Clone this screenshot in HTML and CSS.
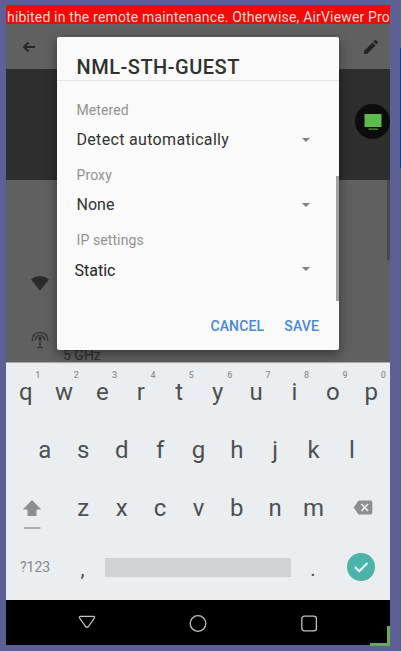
FILE: index.html
```html
<!DOCTYPE html>
<html lang="en">
<head>
<meta charset="utf-8">
<title>Wi-Fi network settings</title>
<link rel="stylesheet" href="styles.css">
</head>
<body>
<div class="edge"></div>
<main class="phone">
  <div class="ticker"><span>hibited in the remote maintenance. Otherwise, AirViewer Pro</span></div>
  <header class="appbar">
    <svg class="back" width="16" height="16" viewBox="0 0 16 16"><path d="M14 8H3M7.500 3.500L3 8l4.500 4.500" fill="none" stroke="#262626" stroke-width="1.900"/></svg>
    <svg width="18" height="18" viewBox="0 0 18 18"><path d="M2 13L10.600 4.400l3 3L5 16H2zM11.400 3.600l1.300-1.300q.7-.6 1.400 0l1.600 1.600q.6.700 0 1.400L14.400 6.600z" fill="#232323"/></svg>
  </header>
  <section class="banner">
    <div class="viewer"><svg width="18" height="18" viewBox="0 0 18 18"><path d="M.5 1h17v13H.5z" fill="#5dbb4b"/><path d="M4.500 15.500h9.500v1.300H4.500z" fill="#4c963e"/></svg></div>
  </section>
  <section class="details">
    <svg class="wifi" width="18" height="15" viewBox="0 0 18 15"><path d="M0 3.400Q9-3.200 18 3.400L9 14.800z" fill="#2b2b2b"/></svg>
    <svg class="antenna" width="18" height="18" viewBox="0 0 18 18"><g fill="none" stroke="#383838" stroke-width="1.500"><path d="M1.500 10C.5 5 4 1.500 9 1.500s8.500 3.500 7.500 8.500M4.500 9.500C4 6.500 6 4.500 9 4.500s5 2 4.500 5M9 7.500v9M6 16.500h6"/></g><circle cx="9" cy="7.500" r="1.800" fill="#333"/></svg>
    <span class="freq">5 GHz</span>
    <i class="page-scroll"></i>
  </section>

  <section class="keyboard">
    <div class="row">
      <b class="key">q<sup>1</sup></b><b class="key">w<sup>2</sup></b><b class="key">e<sup>3</sup></b><b class="key">r<sup>4</sup></b><b class="key">t<sup>5</sup></b><b class="key">y<sup>6</sup></b><b class="key">u<sup>7</sup></b><b class="key">i<sup>8</sup></b><b class="key">o<sup>9</sup></b><b class="key">p<sup>0</sup></b>
    </div>
    <div class="row inset">
      <b class="key">a</b><b class="key">s</b><b class="key">d</b><b class="key">f</b><b class="key">g</b><b class="key">h</b><b class="key">j</b><b class="key">k</b><b class="key">l</b>
    </div>
    <div class="row">
      <span class="wide shift"><svg width="20" height="32" viewBox="0 0 20 32"><path d="M10 1l9.200 9.500h-4.700V17h-9v-6.500H.8z" fill="#8b8f91"/><path d="M2 29h16.500" stroke="#a5a8aa" stroke-width="1.800"/></svg></span>
      <b class="key">z</b><b class="key">x</b><b class="key">c</b><b class="key">v</b><b class="key">b</b><b class="key">n</b><b class="key">m</b>
      <span class="wide erase"><svg width="20" height="15" viewBox="0 0 20 15"><path d="M5.500.5H17.500Q19.300.5 19.300 2.200v10.600q0 1.700-1.800 1.700H5.500L.7 7.500z" fill="#8b8f91"/><path d="M8.500 4l6.500 7M15 4l-6.500 7" stroke="#e4e8ea" stroke-width="1.800"/></svg></span>
    </div>
    <div class="row bottom">
      <span class="symbols">?123</span><b class="comma">,</b><span class="space"></span><b class="period">.</b>
      <span class="enter"><svg width="28" height="28" viewBox="0 0 28 28"><circle cx="14" cy="14" r="14" fill="#4bb3a9"/><path d="M8 14l4.200 4.300L20.500 10" fill="none" stroke="#e2fffb" stroke-width="2"/></svg></span>
    </div>
  </section>
  <nav class="navbar">
    <svg width="18" height="18" viewBox="0 0 18 18"><path d="M2.500 2.300h13q1.500.3.900 1.700L10.200 12.800q-1.200 1.200-2.400 0L1.600 4Q1 2.600 2.500 2.300z"/></svg>
    <svg width="18" height="18" viewBox="0 0 18 18"><circle cx="9" cy="9.500" r="7.800"/></svg>
    <svg width="18" height="18" viewBox="0 0 18 18"><rect x="1.800" y="2.200" width="14.600" height="14.600" rx="2.600"/></svg>
  </nav>

  <section class="dialog">
    <h1><span>NML-STH-GUEST</span></h1>
    <div class="fields">
      <label>Metered</label>
      <div class="select"><span class="long">Detect automatically</span><i></i></div>
      <label>Proxy</label>
      <div class="select"><span>None</span><i></i></div>
      <label>IP settings</label>
      <div class="select static"><span>Static</span><i></i></div>
    </div>
    <footer><button class="cancel">CANCEL</button><button>SAVE</button></footer>
  </section>
  <i class="corner"></i>
</main>
</body>
</html>
```

FILE: styles.css
```css
* { box-sizing: border-box; }
body { margin: 0; height: 651px; overflow: hidden; background: #5d6096; font-family: Roboto, sans-serif; }
.edge { position: absolute; right: 0; top: 0; width: 1px; height: 651px; background: linear-gradient(#666 48px, #124377 48px 168px, #605f70 168px); }
.phone { position: relative; width: 384px; height: 640px; margin: 5px 0 0 6px; display: flex; flex-direction: column; }
.ticker { height: 19px; background: #f00a08; color: #ffd9d2; font-size: 14px; letter-spacing: .17px; line-height: 25px; white-space: nowrap; overflow: hidden; padding-left: 1px; }
.appbar { height: 45px; background: #606060; display: flex; justify-content: space-between; align-items: center; padding: 0 10px 0 15px; }
.banner { height: 111px; background: #2e2e2e; display: flex; justify-content: flex-end; overflow: hidden; padding: 35px 0 0; }
.viewer { width: 35px; height: 35px; border-radius: 50%; background: #0c0c0c; display: grid; place-items: center; }
.details { position: relative; height: 182px; background: #606060; display: grid; grid-template: 56px 28px / 57px 1fr; align-content: end; overflow: hidden; }
.wifi { margin: -2px 0 0 25px; }
.antenna { grid-row: 2; margin: -3px 0 0 25px; }
.freq { grid-row: 2; grid-column: 2; font-size: 14px; line-height: 16px; color: #303030; padding-top: 13px; }
.page-scroll { position: absolute; right: 0; top: 0; width: 3px; height: 80px; background: #484848; }

.keyboard { height: 238px; background: #ebeef1; border-top: 1px solid #a9abac; color: #4c5052; padding-top: 1px; }
.row { display: flex; height: 58px; }
.inset { padding: 0 19.2px; }
.key { position: relative; left: .5px; flex: 0 0 38.4px; text-align: center; font-weight: 400; font-size: 24px; line-height: 57px; }
.key sup { position: absolute; right: 4.5px; top: 5.5px; font-size: 9px; line-height: 11px; color: #909496; font-weight: 500; }
.wide { width: 57.6px; }
.shift { padding: 19px 0 0 16px; }
.erase { padding: 20px 0 0 21px; }
.bottom { align-items: center; }
.symbols { width: 56px; padding-left: 14px; font-size: 14px; color: #85898c; }
.comma { width: 43px; text-align: center; font-weight: 400; font-size: 21px; padding: 4px 2px 0 0; }
.space { width: 186px; height: 19px; background: #cfd3d6; }
.period { width: 44px; text-align: center; font-weight: 400; font-size: 20px; padding-top: 3px; }
.enter { height: 28px; padding-left: 12px; }
.navbar { height: 45px; background: #000; display: flex; gap: 93px; padding: 14px 0 0 71.5px; }
.navbar svg { fill: none; stroke: #c4c4c4; stroke-width: 1.3; }

.dialog { position: absolute; left: 51px; top: 32px; width: 281.5px; height: 313px; background: #fafafa; border-radius: 2px; box-shadow: 0 4px 12px rgba(0,0,0,.45); color: #333; display: flex; flex-direction: column; }
h1 { margin: 0; height: 44px; padding: 18px 19.500px 0; border-bottom: 1px solid #e3e3e3; font-size: 20px; line-height: 24px; font-weight: 500; color: #303030; }
h1 span { letter-spacing: .5px; }
.fields { height: 220px; padding: 20px 28.500px 0 19.500px; background: linear-gradient(#a0a0a0, #a0a0a0) right bottom / 3px 125px no-repeat; }
label { display: block; font-size: 14px; line-height: 19px; height: 20px; color: #919191; letter-spacing: .1px; }
.select { height: 45px; display: flex; justify-content: space-between; font-size: 16px; line-height: 38px; }
.select i { border: 4px solid transparent; border-top-color: #808080; border-bottom: 0; height: 4px; margin-top: 17px; }
.long { letter-spacing: .32px; }
.static { color: #222; }
.static span { margin: 1px 0 0 -2px; }
.static i { margin-top: 16px; }
footer { display: flex; justify-content: flex-end; gap: 20px; padding: 15px 19.500px 0 0; }
button { border: 0; padding: 0; background: none; font: 500 14px/20px Roboto, sans-serif; color: #4787df; letter-spacing: .15px; }
.corner { position: absolute; right: 0; bottom: -1px; width: 20px; height: 20px; border: solid #62ae55; border-width: 0 3px 3px 0; }
```
